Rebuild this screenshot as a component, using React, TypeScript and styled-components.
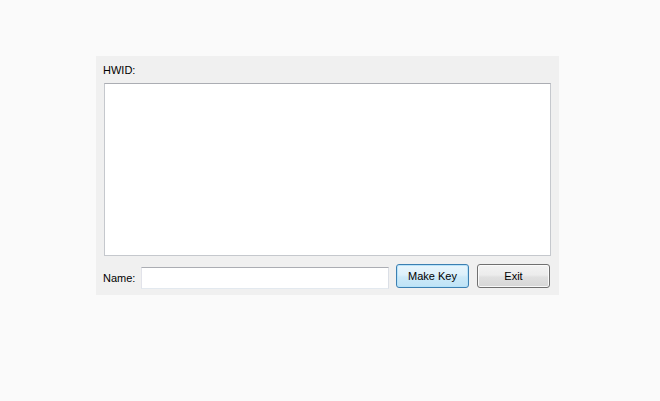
import React from "react";
import styled, { createGlobalStyle } from "styled-components";

const Global = createGlobalStyle`
  html, body { margin: 0; padding: 0; background: #fafafa; }
  body { font-family: "Liberation Sans", Arial, sans-serif; font-size: 11px; color: #000; }
`;

const Page = styled.div`
  width: 660px;
  height: 401px;
  padding: 56px 0 0 96px;
  box-sizing: border-box;
`;

const Dialog = styled.div`
  width: 463px;
  height: 239px;
  box-sizing: border-box;
  background: #f0f0f0;
  padding: 8px;
  display: flex;
  flex-direction: column;
`;

const Label = styled.div`
  height: 19px;
  line-height: 13px;
  margin-left: -1px;
  box-sizing: border-box;
`;

const TextBox = styled.div`
  height: 173px;
  box-sizing: border-box;
  background: #fff;
  border: 1px solid #c5c8cd;
  border-top-color: #abadb3;
`;

const Row = styled.div`
  margin-top: 8px;
  display: flex;
  align-items: flex-start;
  height: 23px;
`;

const RowLabel = styled.span`
  width: 38px;
  margin-left: -1px;
  line-height: 13px;
  padding-top: 8px;
`;

const Input = styled.div`
  width: 248px;
  height: 22px;
  margin-top: 3px;
  box-sizing: border-box;
  background: #fff;
  border: 1px solid #e3e9ef;
  border-top-color: #abadb3;
  border-left-color: #e2e3ea;
  border-right-color: #dbdfe6;
`;

const Button = styled.button<{ $default?: boolean }>`
  width: 73px;
  height: 24px;
  margin-left: ${(p) => (p.$default ? "7px" : "8px")};
  box-sizing: border-box;
  font-family: "Liberation Sans", Arial, sans-serif;
  font-size: 11px;
  color: #000;
  padding: 0;
  border-radius: 3px;
  border: 1px solid ${(p) => (p.$default ? "#3c7fb1" : "#707070")};
  box-shadow: inset 0 0 0 1px
    ${(p) => (p.$default ? "rgba(180,225,250,0.9)" : "rgba(252,252,252,0.9)")};
  background: ${(p) =>
    p.$default
      ? "linear-gradient(#e9f5fc 0%, #dcf0fb 45%, #cce9f8 55%, #bfe3f6 100%)"
      : "linear-gradient(#f3f3f3 0%, #ececec 45%, #e0e0e0 55%, #d6d6d6 100%)"};
`;

export default function App() {
  return (
    <>
      <Global />
      <Page>
        <Dialog>
          <Label>HWID:</Label>
          <TextBox />
          <Row>
            <RowLabel>Name:</RowLabel>
            <Input />
            <Button $default>Make Key</Button>
            <Button>Exit</Button>
          </Row>
        </Dialog>
      </Page>
    </>
  );
}
